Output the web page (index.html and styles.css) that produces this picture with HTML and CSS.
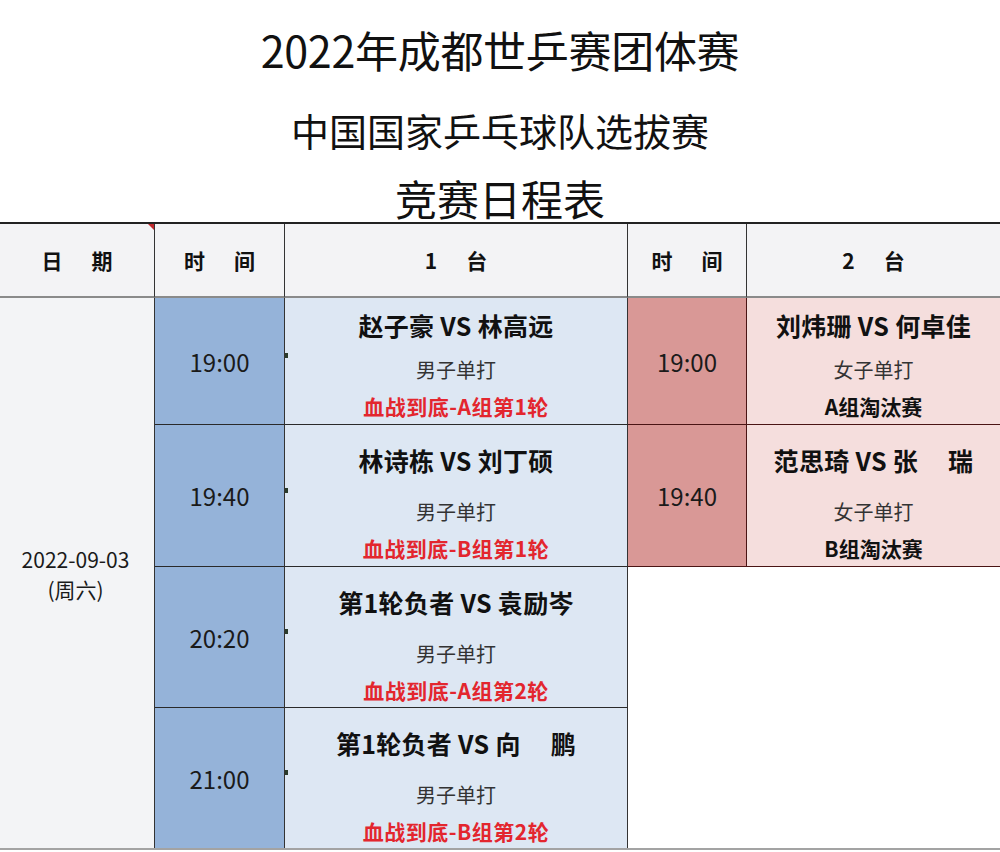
FILE: index.html
```html
<!DOCTYPE html>
<html lang="zh-CN">
<head>
<meta charset="utf-8">
<title>竞赛日程表</title>
<link rel="stylesheet" href="styles.css">
</head>
<body>
<div class="page">
  <div class="title">
    <div class="t1">2022年成都世乒赛团体赛</div>
    <div class="t2">中国国家乒乓球队选拔赛</div>
    <div class="t3">竞赛日程表</div>
  </div>
  <div class="sched">
    <div class="hd hd-date"><span>日</span><span>期</span></div>
    <div class="hd"><span>时</span><span>间</span></div>
    <div class="hd"><span>1</span><span>台</span></div>
    <div class="hd"><span>时</span><span>间</span></div>
    <div class="hd hd-last"><span>2</span><span>台</span></div>

    <div class="date"><div>2022-09-03</div><div>(周六)</div></div>
    <div class="empty"></div>

    <div class="time blue">19:00</div>
    <div class="match lblue first tick">
      <div class="name">赵子豪 VS 林高远</div>
      <div class="sub">男子单打</div>
      <div class="red">血战到底-A组第1轮</div>
    </div>
    <div class="time pink">19:00</div>
    <div class="match lpink first last">
      <div class="name">刘炜珊 VS 何卓佳</div>
      <div class="sub">女子单打</div>
      <div class="grp">A组淘汰赛</div>
    </div>

    <div class="time blue">19:40</div>
    <div class="match lblue tick">
      <div class="name">林诗栋 VS 刘丁硕</div>
      <div class="sub">男子单打</div>
      <div class="red">血战到底-B组第1轮</div>
    </div>
    <div class="time pink">19:40</div>
    <div class="match lpink last">
      <div class="name">范思琦 VS 张<span class="sp"></span>瑞</div>
      <div class="sub">女子单打</div>
      <div class="grp">B组淘汰赛</div>
    </div>

    <div class="time blue">20:20</div>
    <div class="match lblue tick">
      <div class="name">第1轮负者 VS 袁励岑</div>
      <div class="sub">男子单打</div>
      <div class="red">血战到底-A组第2轮</div>
    </div>

    <div class="time blue final">21:00</div>
    <div class="match lblue final tick">
      <div class="name">第1轮负者 VS 向<span class="sp"></span>鹏</div>
      <div class="sub">男子单打</div>
      <div class="red">血战到底-B组第2轮</div>
    </div>
  </div>
</div>
</body>
</html>
```

FILE: styles.css
```css
* { box-sizing: border-box; }
html, body { margin: 0; padding: 0; background: #fff; }
body {
  font-family: "Noto Sans CJK SC", "Noto Sans", sans-serif;
  color: #111;
  width: 1000px;
  height: 852px;
  overflow: hidden;
}
.page { width: 1000px; }

.title {
  height: 222px;
  padding-top: 21px;
  display: flex;
  flex-direction: column;
  align-items: center;
}
.t1 { font-size: 43px; line-height: 56px; letter-spacing: -0.3px; }
.t2 { font-size: 38px; line-height: 56px; margin-top: 25px; }
.t3 { font-size: 42px; line-height: 48px; margin-top: 16px; }

.sched {
  display: grid;
  grid-template-columns: 155px 130px 343px 119px 253px;
  grid-template-rows: 74px 127px 142px 141px 140px;
  border-top: 2px solid #222;
  border-bottom: 2px solid #a3a3a3;
}

.hd {
  background: #f3f3f5;
  border-right: 1px solid #333;
  border-bottom: 2px solid #8a8a8a;
  display: flex;
  justify-content: center;
  align-items: center;
  gap: 29px;
  font-size: 21px;
  font-weight: 700;
  color: #111;
}
.hd-date { position: relative; }
.hd-date::after {
  content: "";
  position: absolute;
  top: 0;
  right: 0;
  border-top: 6px solid #c0282c;
  border-left: 6px solid transparent;
}
.hd-last { border-right: none; }

.date {
  grid-column: 1;
  grid-row: 2 / span 4;
  background: #f3f4f6;
  border-right: 1px solid #333;
  display: flex;
  flex-direction: column;
  justify-content: center;
  align-items: center;
  font-size: 21px;
  line-height: 30px;
  color: #1a1a1a;
  padding-top: 2px;
  padding-right: 3px;
}

.empty {
  grid-column: 4 / span 2;
  grid-row: 4 / span 2;
  background: #fff;
}

.time {
  border-right: 1px solid #333;
  border-bottom: 1px solid #2a2a2a;
  display: flex;
  justify-content: center;
  align-items: center;
  font-size: 24px;
  color: #1a1a1a;
}
.blue { background: #95b3d9; }
.pink { background: #d99896; border-bottom-color: #4a1414; border-right-color: #4a1414; }

.match {
  border-right: 1px solid #333;
  border-bottom: 1px solid #2a2a2a;
  display: flex;
  flex-direction: column;
  align-items: center;
  padding-top: 20px;
  position: relative;
}
.tick::before {
  content: "";
  position: absolute;
  left: 0;
  top: 50%;
  margin-top: -8px;
  width: 3px;
  height: 5px;
  background: #2a3a2a;
}
.lblue { background: #dde7f3; }
.lpink { background: #f5dedd; border-bottom-color: #4a1414; }
.last { border-right: none; }
.final { border-bottom: none; }
.first { padding-top: 12px; }

.name {
  font-size: 25px;
  line-height: 30px;
  font-weight: 700;
  color: #111;
  letter-spacing: 0.3px;
}
.sp { display: inline-block; width: 30px; }
.sub {
  font-size: 20px;
  line-height: 26px;
  color: #333;
  margin-top: 24px;
}
.first .sub { margin-top: 17px; }
.red {
  font-size: 21px;
  line-height: 26px;
  font-weight: 700;
  color: #e3262e;
  margin-top: 10px;
  letter-spacing: 0.5px;
}
.grp {
  font-size: 21px;
  line-height: 26px;
  font-weight: 700;
  color: #111;
  margin-top: 10px;
}
```
